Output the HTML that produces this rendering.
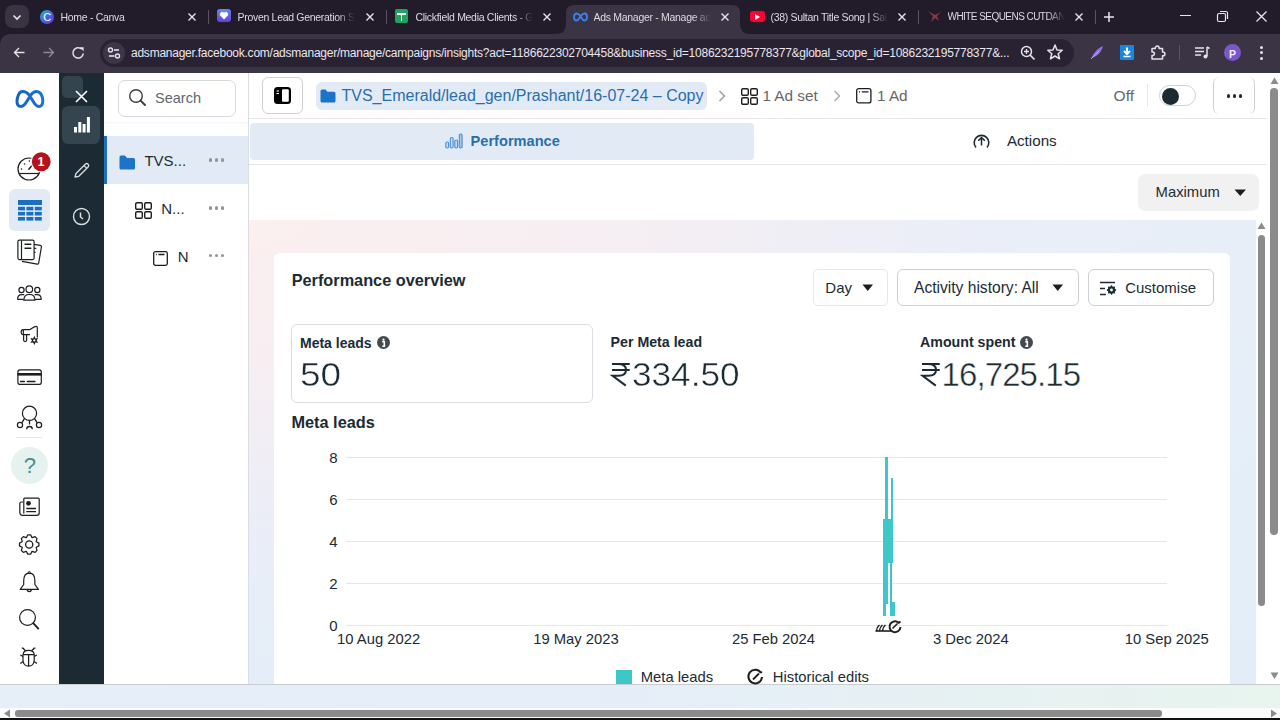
<!DOCTYPE html>
<html><head><meta charset="utf-8"><title>Ads Manager</title><style>
*{box-sizing:border-box}
html,body{margin:0;padding:0}
body{width:1280px;height:720px;overflow:hidden;position:relative;font-family:"Liberation Sans", sans-serif;background:#fff}
.t{position:absolute;line-height:1;white-space:nowrap}
.tabt{font-size:10.5px;color:#dedae3;letter-spacing:-0.3px;overflow:hidden;-webkit-mask-image:linear-gradient(90deg,#000 85%,transparent 100%);height:14px}
svg{overflow:visible}
</style></head><body>
<div style="position:absolute;left:0px;top:0px;width:1280px;height:44px;background:#211b2a"></div>
<div style="position:absolute;left:5px;top:5px;width:24px;height:23px;background:#3a3344;border-radius:8px"></div>
<svg style="position:absolute;left:11px;top:11px;" width="12" height="12" viewBox="0 0 12 12"><path d="M2.5 4.5 L6 8 L9.5 4.5" stroke="#e8e4ee" stroke-width="1.6" fill="none"/></svg>
<svg style="position:absolute;left:556px;top:4px" width="194" height="30" viewBox="0 0 194 30"><path d="M0 30 Q10 30 10 20 L10 9 Q10 1 18 1 L176 1 Q184 1 184 9 L184 20 Q184 30 194 30 Z" fill="#3b3445"/></svg>
<div style="position:absolute;left:208px;top:10px;width:1px;height:14px;background:#5a5366"></div>
<div style="position:absolute;left:386px;top:10px;width:1px;height:14px;background:#5a5366"></div>
<div style="position:absolute;left:918px;top:10px;width:1px;height:14px;background:#5a5366"></div>
<div style="position:absolute;left:1095px;top:10px;width:1px;height:14px;background:#5a5366"></div>
<div style="position:absolute;left:40px;top:10px;width:14px;height:14px;border-radius:50%;background:linear-gradient(135deg,#1fb8c9,#4e59e4 60%,#7a2fd0)"></div>
<div class="t" style="left:43.20px;top:12.18px;font-size:11px;color:#fff;font-family:"Liberation Serif",serif;font-style:italic;">C</div>
<div class="t tabt" style="left:60.5px;top:12.11px;width:117px;">Home - Canva</div>
<svg style="position:absolute;left:187px;top:12px;" width="10" height="10" viewBox="0 0 10 10"><path d="M1.5 1.5 L8.5 8.5 M8.5 1.5 L1.5 8.5" stroke="#e8e4ee" stroke-width="1.4"/></svg>
<div style="position:absolute;left:217px;top:9px;width:14px;height:13px;border-radius:3px;background:linear-gradient(180deg,#5a8cf0,#6a3fd8)"></div>
<svg style="position:absolute;left:219px;top:11px;" width="10" height="9" viewBox="0 0 10 9"><path d="M5 8.5 L1.2 4.6 A2.2 2.2 0 0 1 5 2 A2.2 2.2 0 0 1 8.8 4.6 Z" fill="#fff"/></svg>
<div class="t tabt" style="left:237.5px;top:12.11px;width:117px;">Proven Lead Generation St</div>
<svg style="position:absolute;left:365px;top:12px;" width="10" height="10" viewBox="0 0 10 10"><path d="M1.5 1.5 L8.5 8.5 M8.5 1.5 L1.5 8.5" stroke="#e8e4ee" stroke-width="1.4"/></svg>
<div style="position:absolute;left:395px;top:9px;width:13px;height:14px;border-radius:2px;background:#1fa463"></div>
<div style="position:absolute;left:397px;top:13px;width:9px;height:1.6px;background:#fff"></div>
<div style="position:absolute;left:400.5px;top:13px;width:1.6px;height:8px;background:#fff"></div>
<div class="t tabt" style="left:415.5px;top:12.11px;width:117px;">Clickfield Media Clients - G</div>
<svg style="position:absolute;left:542px;top:12px;" width="10" height="10" viewBox="0 0 10 10"><path d="M1.5 1.5 L8.5 8.5 M8.5 1.5 L1.5 8.5" stroke="#e8e4ee" stroke-width="1.4"/></svg>
<svg style="position:absolute;left:573px;top:12px;" width="15" height="10" viewBox="0 0 15 10"><path d="M3.5 1.5 C1.5 1.5 1 4 1 5.2 C1 7 2 8.5 3.5 8.5 C5.5 8.5 6.5 5.5 7.5 4.2 C8.5 3 9.5 1.5 11.5 1.5 C13.2 1.5 14 3.5 14 5 C14 7 13 8.5 11.5 8.5 C9.5 8.5 8 5 7.2 3.8 C6.2 2.4 5 1.5 3.5 1.5 Z" stroke="#3b82f0" stroke-width="1.8" fill="none"/></svg>
<div class="t tabt" style="left:593.5px;top:12.11px;width:117px;">Ads Manager - Manage ad</div>
<svg style="position:absolute;left:720px;top:12px;" width="10" height="10" viewBox="0 0 10 10"><path d="M1.5 1.5 L8.5 8.5 M8.5 1.5 L1.5 8.5" stroke="#e8e4ee" stroke-width="1.4"/></svg>
<div style="position:absolute;left:750px;top:11px;width:15px;height:11px;border-radius:3px;background:#ff0033"></div>
<svg style="position:absolute;left:755px;top:13.5px;" width="6" height="6" viewBox="0 0 6 6"><path d="M0 0 L5 3 L0 6 Z" fill="#fff"/></svg>
<div class="t tabt" style="left:770.5px;top:12.11px;width:117px;">(38) Sultan Title Song | Sal</div>
<svg style="position:absolute;left:897px;top:12px;" width="10" height="10" viewBox="0 0 10 10"><path d="M1.5 1.5 L8.5 8.5 M8.5 1.5 L1.5 8.5" stroke="#e8e4ee" stroke-width="1.4"/></svg>
<svg style="position:absolute;left:927px;top:9px;" width="15" height="15" viewBox="0 0 15 15"><path d="M1 2 L6 7 L4 13 L8 9 L12 12 L10 7 L14 3 L8 6 Z" fill="#8a3a45"/></svg>
<div class="t tabt" style="left:947.5px;top:12.11px;width:117px;font-size:10px;letter-spacing:-0.55px;">WHITE SEQUENS CUTDAN</div>
<svg style="position:absolute;left:1074px;top:12px;" width="10" height="10" viewBox="0 0 10 10"><path d="M1.5 1.5 L8.5 8.5 M8.5 1.5 L1.5 8.5" stroke="#e8e4ee" stroke-width="1.4"/></svg>
<svg style="position:absolute;left:1103px;top:11px;" width="12" height="12" viewBox="0 0 12 12"><path d="M6 1 V11 M1 6 H11" stroke="#e8e4ee" stroke-width="1.5"/></svg>
<div style="position:absolute;left:1180px;top:15px;width:11px;height:1px;background:#e8e4ee"></div>
<svg style="position:absolute;left:1216px;top:10px;" width="13" height="13" viewBox="0 0 13 13"><rect x="1.5" y="3.5" width="8" height="8" rx="1.5" stroke="#e8e4ee" stroke-width="1.2" fill="none"/><path d="M4 1.5 H10 Q11.5 1.5 11.5 3 V9" stroke="#e8e4ee" stroke-width="1.2" fill="none"/></svg>
<svg style="position:absolute;left:1255px;top:10px;" width="13" height="13" viewBox="0 0 13 13"><path d="M1.5 1.5 L11.5 11.5 M11.5 1.5 L1.5 11.5" stroke="#e8e4ee" stroke-width="1.3"/></svg>
<div style="position:absolute;left:0px;top:34px;width:1280px;height:39px;background:#3b3445;border-top-left-radius:10px"></div>
<svg style="position:absolute;left:11px;top:44px;" width="16" height="16" viewBox="0 0 16 16"><path d="M13.5 8.5 H3.5 M8 4 L3.5 8.5 L8 13" stroke="#e6e2ea" stroke-width="1.4" fill="none"/></svg>
<svg style="position:absolute;left:41px;top:44px;" width="16" height="16" viewBox="0 0 16 16"><path d="M2.5 8.5 H12.5 M8 4 L12.5 8.5 L8 13" stroke="#8d8696" stroke-width="1.4" fill="none"/></svg>
<svg style="position:absolute;left:70px;top:44px;" width="18" height="17" viewBox="0 0 18 17"><path d="M13.3 9.5 A5.2 5.2 0 1 1 11.6 5" stroke="#e6e2ea" stroke-width="1.5" fill="none"/><path d="M9.6 3.2 H13.6 V7.2 Z" fill="#e6e2ea"/></svg>
<div style="position:absolute;left:100px;top:39px;width:974px;height:28px;background:#292233;border-radius:14px"></div>
<div style="position:absolute;left:103px;top:42px;width:22px;height:22px;border-radius:50%;background:#3d3648"></div>
<svg style="position:absolute;left:106px;top:45px;" width="16" height="16" viewBox="0 0 16 16"><circle cx="4.5" cy="5" r="2" stroke="#e6e2ea" stroke-width="1.4" fill="none"/><path d="M8 5 H13" stroke="#e6e2ea" stroke-width="1.6"/><circle cx="11.5" cy="11" r="2" stroke="#e6e2ea" stroke-width="1.4" fill="none"/><path d="M3 11 H8.5" stroke="#e6e2ea" stroke-width="1.6"/></svg>
<div class="t" style="left:131px;top:47.14px;font-size:12px;color:#e9e6ee;letter-spacing:-0.24px">adsmanager.facebook.com/adsmanager/manage/campaigns/insights?act=1186622302704458&amp;business_id=1086232195778377&amp;global_scope_id=1086232195778377&amp;...</div>
<svg style="position:absolute;left:1019px;top:44px;" width="18" height="18" viewBox="0 0 18 18"><circle cx="7.5" cy="7.5" r="5" stroke="#e6e2ea" stroke-width="1.5" fill="none"/><path d="M11 11 L15.5 15.5" stroke="#e6e2ea" stroke-width="1.7"/><path d="M5 7.5 H10 M7.5 5 V10" stroke="#e6e2ea" stroke-width="1.3"/></svg>
<svg style="position:absolute;left:1046px;top:43px;" width="18" height="18" viewBox="0 0 18 18"><path d="M9 2 L11 7 L16.2 7.3 L12.2 10.7 L13.5 15.8 L9 13 L4.5 15.8 L5.8 10.7 L1.8 7.3 L7 7 Z" stroke="#e6e2ea" stroke-width="1.5" fill="none" stroke-linejoin="round"/></svg>
<svg style="position:absolute;left:1089px;top:45px;" width="16" height="15" viewBox="0 0 16 15"><path d="M2 14 C4 9 8 3 14 1 C13 6 9 11 3 13 Z" fill="#8f6ee0"/><path d="M2 14 L10 6" stroke="#c9b8f5" stroke-width="0.8"/></svg>
<div style="position:absolute;left:1120px;top:45px;width:14px;height:15px;background:#1a86e0;border-radius:1px"></div>
<svg style="position:absolute;left:1120px;top:45px;" width="14" height="15" viewBox="0 0 14 15"><path d="M7 2.5 V8.5 M4 6 L7 9 L10 6" stroke="#fff" stroke-width="2" fill="none"/><path d="M3.5 11.5 H10.5" stroke="#fff" stroke-width="1.5"/></svg>
<svg style="position:absolute;left:1149px;top:44px;" width="17" height="17" viewBox="0 0 17 17"><path d="M3 4.5 H6.3 V4 A1.9 1.9 0 0 1 10.1 4 V4.5 H13.5 V8 H14 A1.9 1.9 0 0 1 14 11.8 H13.5 V15 H3 V11.5 H3.8 A1.7 1.7 0 0 0 3.8 8.1 H3 Z" stroke="#e6e2ea" stroke-width="1.5" fill="none" stroke-linejoin="round"/></svg>
<div style="position:absolute;left:1179px;top:45px;width:1px;height:15px;background:#5b5466"></div>
<svg style="position:absolute;left:1194px;top:45px;" width="17" height="15" viewBox="0 0 17 15"><path d="M1 3 H10 M1 6.5 H10 M1 10 H7" stroke="#e6e2ea" stroke-width="1.5"/><path d="M13 2 V11" stroke="#e6e2ea" stroke-width="1.5"/><circle cx="11.5" cy="11.5" r="2" fill="#e6e2ea"/><path d="M13 2 L15.5 3.5" stroke="#e6e2ea" stroke-width="1.5"/></svg>
<div style="position:absolute;left:1224px;top:44px;width:17px;height:17px;border-radius:50%;background:#7c57c9"></div>
<div class="t" style="left:1229.00px;top:48.61px;font-size:10.5px;color:#f3eeff;font-weight:700;">P</div>
<div style="position:absolute;left:1260.3px;top:45.8px;width:3px;height:3px;border-radius:50%;background:#e6e2ea"></div>
<div style="position:absolute;left:1260.3px;top:51.3px;width:3px;height:3px;border-radius:50%;background:#e6e2ea"></div>
<div style="position:absolute;left:1260.3px;top:56.8px;width:3px;height:3px;border-radius:50%;background:#e6e2ea"></div>
<div style="position:absolute;left:0px;top:73px;width:1280px;height:611px;background:#fff"></div>
<div style="position:absolute;left:0px;top:684px;width:1280px;height:1px;background:#c9cdd2"></div>
<div style="position:absolute;left:0px;top:685px;width:1280px;height:23px;background:linear-gradient(90deg,#e6eef8 0%,#e5eef8 50%,#e8f4ee 100%)"></div>
<div style="position:absolute;left:0px;top:708px;width:1280px;height:10px;background:#fbfbfb"></div>
<div style="position:absolute;left:15px;top:710px;width:1147px;height:6.5px;background:#8b8b8b;border-radius:3px"></div>
<svg style="position:absolute;left:3px;top:709px;" width="8" height="9" viewBox="0 0 8 9"><path d="M7 0.5 L1 4.5 L7 8.5 Z" fill="#8b8b8b"/></svg>
<svg style="position:absolute;left:1270px;top:709px;" width="8" height="9" viewBox="0 0 8 9"><path d="M1 0.5 L7 4.5 L1 8.5 Z" fill="#8b8b8b"/></svg>
<div style="position:absolute;left:0px;top:718px;width:1280px;height:2px;background:#111"></div>
<svg style="position:absolute;left:14px;top:88px;" width="32" height="22" viewBox="0 0 32 22"><defs><linearGradient id="mg" x1="0" y1="0" x2="1" y2="0"><stop offset="0" stop-color="#1463c4"/><stop offset="1" stop-color="#1a74da"/></linearGradient></defs><path d="M8.5 3.5 C5 3.5 3 9 3 13.5 C3 16.5 4.5 18.5 7 18.5 C9.5 18.5 11.5 16 14 11.5 L16.5 7.5 C18.5 4.5 20.5 3.5 22.5 3.5 C26.5 3.5 28.8 8 28.8 12.8 C28.8 16.3 27.2 18.5 24.8 18.5 C22.3 18.5 20.5 16 18 11.5 L15.5 7.5 C13 4 11 3.5 8.5 3.5 Z" stroke="url(#mg)" stroke-width="3" fill="none" stroke-linejoin="round"/></svg>
<svg style="position:absolute;left:0;top:0" width="59" height="720" viewBox="0 0 59 720"><circle cx="29" cy="169" r="11" stroke="#1c1e21" stroke-width="1.2" fill="none"/><path d="M18.6 173.5 H39.4" stroke="#1c1e21" stroke-width="1.2"/><path d="M28.8 169.2 L32 165.6" stroke="#1c1e21" stroke-width="1.5" stroke-linecap="round"/><circle cx="21.5" cy="169" r="0.8" fill="#1c1e21"/><circle cx="24.5" cy="164" r="0.8" fill="#1c1e21"/><circle cx="29.5" cy="161" r="0.8" fill="#1c1e21"/><circle cx="41.25" cy="161.75" r="10.6" fill="#fff"/><circle cx="41.25" cy="161.75" r="9.4" fill="#b5121d"/><rect x="17.9" y="240.1" width="16.2" height="19.5" rx="1.5" stroke="#1c1e21" stroke-width="1.2" fill="none"/><path d="M21.5 240.5 V259.5" stroke="#1c1e21" stroke-width="1.2"/><path d="M24.5 244.3 H31.3 M24.5 248.3 H31.3" stroke="#1c1e21" stroke-width="1.5"/><path d="M34.1 244.4 L40.3 245.4 Q41.6 245.7 41.4 247 L38.7 263 Q38.5 264.3 37.2 264.1 L22 261.3" stroke="#1c1e21" stroke-width="1.2" fill="none"/><path d="M34.3 248.3 H36.3 M34.3 252.3 H35.5" stroke="#1c1e21" stroke-width="1.3"/><circle cx="21.5" cy="290" r="2.6" stroke="#1c1e21" stroke-width="1.2" fill="none"/><circle cx="29.3" cy="289.2" r="3.3" stroke="#1c1e21" stroke-width="1.2" fill="none"/><circle cx="37.3" cy="290" r="2.6" stroke="#1c1e21" stroke-width="1.2" fill="none"/><path d="M24.2 294.6 H21.8 C19 294.6 17.6 296.2 17.6 299.3 H23.8 M34.6 294.6 H37 C39.8 294.6 41.2 296.2 41.2 299.3 H35" stroke="#1c1e21" stroke-width="1.2" fill="none" stroke-linejoin="round"/><path d="M23.8 300.2 C23.8 296 25.8 294.3 29.4 294.3 C33 294.3 35 296 35 300.2 Z" stroke="#1c1e21" stroke-width="1.2" fill="#fff" stroke-linejoin="round"/><path d="M23.3 329.6 H29.5 C31.5 329.6 33.5 326.3 36 326.3 Q37.3 326.3 37.3 327.6 V337.5" stroke="#1c1e21" stroke-width="1.2" fill="none"/><path d="M23.3 329.6 C20.5 329.6 20.3 334.6 23.3 334.6 H30" stroke="#1c1e21" stroke-width="1.2" fill="none"/><path d="M23.3 329.6 V334.6 M23.6 334.8 V340 Q23.6 341.5 25.1 341.5 Q26.6 341.5 26.6 340 V334.8" stroke="#1c1e21" stroke-width="1.25" fill="none"/><polygon points="34.30,335.80 35.45,338.41 38.28,338.10 36.60,340.40 38.28,342.70 35.45,342.39 34.30,345.00 33.15,342.39 30.32,342.70 32.00,340.40 30.32,338.10 33.15,338.41" fill="#1c1e21"/><circle cx="34.3" cy="340.4" r="1.1" fill="#fff"/><rect x="17.9" y="369.8" width="23.4" height="14.6" rx="2.2" stroke="#1c1e21" stroke-width="1.2" fill="none"/><rect x="17.5" y="373" width="24" height="2.6" fill="#1c1e21"/><path d="M20.5 381.5 H24.4 M27.2 381.5 H35" stroke="#1c1e21" stroke-width="1.3" stroke-linecap="round"/><circle cx="29.5" cy="413.3" r="7.1" stroke="#1c1e21" stroke-width="1.2" fill="none"/><circle cx="20" cy="425" r="2.6" stroke="#1c1e21" stroke-width="1.2" fill="none"/><circle cx="39" cy="425" r="2.6" stroke="#1c1e21" stroke-width="1.2" fill="none"/><path d="M24.4 418.6 L22 422.7 M34.6 418.6 L37 422.7 M29.5 420.4 V424.5 M26.7 429.3 A2.8 2.8 0 0 1 32.3 429.3" stroke="#1c1e21" stroke-width="1.3" fill="none"/><path d="M23.8 498.2 H38.2 Q39.2 498.2 39.2 499.2 V513 Q39.2 515.4 36.8 515.4 H22.5 Q20 515.4 19.8 512.5 V503.5 Q19.8 502 21.5 502 H23.3" stroke="#1c1e21" stroke-width="1.2" fill="none"/><path d="M23.8 498.2 V513.5" stroke="#1c1e21" stroke-width="1.2"/><circle cx="28.5" cy="503.3" r="2.4" fill="#1c1e21"/><path d="M26.3 508.5 H36 M26.3 511.6 H36" stroke="#1c1e21" stroke-width="1.3"/><path d="M36.30 541.79 L38.90 543.12 L38.90 545.88 L36.30 547.21 L36.14 547.61 L37.04 550.38 L35.08 552.34 L32.31 551.44 L31.91 551.60 L30.58 554.20 L27.82 554.20 L26.49 551.60 L26.09 551.44 L23.32 552.34 L21.36 550.38 L22.26 547.61 L22.10 547.21 L19.50 545.88 L19.50 543.12 L22.10 541.79 L22.26 541.39 L21.36 538.62 L23.32 536.66 L26.09 537.56 L26.49 537.40 L27.82 534.80 L30.58 534.80 L31.91 537.40 L32.31 537.56 L35.08 536.66 L37.04 538.62 L36.14 541.39 Z" stroke="#1c1e21" stroke-width="1.25" fill="none" stroke-linejoin="round"/><circle cx="29.2" cy="544.5" r="3.6" stroke="#1c1e21" stroke-width="1.3" fill="none"/><path d="M29.3 573.2 C24.6 573.2 23.7 577.5 23.7 581 V584.5 L20.2 589.4 H38.4 L34.9 584.5 V581 C34.9 577.5 34 573.2 29.3 573.2 Z" stroke="#1c1e21" stroke-width="1.2" fill="none" stroke-linejoin="round"/><circle cx="29.3" cy="572.6" r="1.1" stroke="#1c1e21" stroke-width="1" fill="none"/><path d="M27.3 589.6 A2 2 0 0 0 31.3 589.6" stroke="#1c1e21" stroke-width="1.3" fill="none"/><circle cx="27.5" cy="617.5" r="7.9" stroke="#1c1e21" stroke-width="1.2" fill="none"/><path d="M33.2 623.2 L38.3 628.6" stroke="#1c1e21" stroke-width="1.9" stroke-linecap="round"/><path d="M23 655 C23 651.5 25.5 650.3 28.6 650.3 C31.7 650.3 34.2 651.5 34.2 655 V660 C34.2 664 31.7 666.2 28.6 666.2 C25.5 666.2 23 664 23 660 Z" stroke="#1c1e21" stroke-width="1.2" fill="none"/><path d="M23 654.5 H34.2 M28.6 654.5 V666 M25.5 650.8 L23 648.2 H21.8 M31.7 650.8 L34.2 648.2 H35.4 M23 656.5 L20.3 655 M34.2 656.5 L36.9 655 M23 661.5 L20.3 663.5 M34.2 661.5 L36.9 663.5" stroke="#1c1e21" stroke-width="1.25" fill="none"/></svg>
<div class="t" style="left:37.60px;top:156.21px;font-size:12.5px;color:#fff;font-weight:700;">1</div>
<div style="position:absolute;left:9px;top:189px;width:41px;height:42px;background:#e2ebf5;border-radius:6px"></div>
<svg style="position:absolute;left:17.5px;top:200px;" width="24" height="21" viewBox="0 0 24 21"><rect x="0" y="0" width="24" height="5" fill="#1b6fc2"/><rect x="0.0" y="6.8" width="7" height="3.6" fill="#1b6fc2"/><rect x="8.4" y="6.8" width="7" height="3.6" fill="#1b6fc2"/><rect x="16.8" y="6.8" width="7" height="3.6" fill="#1b6fc2"/><rect x="0.0" y="11.9" width="7" height="3.6" fill="#1b6fc2"/><rect x="8.4" y="11.9" width="7" height="3.6" fill="#1b6fc2"/><rect x="16.8" y="11.9" width="7" height="3.6" fill="#1b6fc2"/><rect x="0.0" y="17.0" width="7" height="3.6" fill="#1b6fc2"/><rect x="8.4" y="17.0" width="7" height="3.6" fill="#1b6fc2"/><rect x="16.8" y="17.0" width="7" height="3.6" fill="#1b6fc2"/></svg>
<div style="position:absolute;left:16px;top:437px;width:26px;height:1px;background:#e4e6eb"></div>
<div style="position:absolute;left:11px;top:446.5px;width:37px;height:37px;border-radius:50%;background:#e6f2ef"></div>
<div class="t" style="left:23.80px;top:454.87px;font-size:22px;color:#4b8d8a;">?</div>
<div style="position:absolute;left:59px;top:73px;width:45px;height:611px;background:#1c2b33"></div>
<div style="position:absolute;left:62px;top:76px;width:21px;height:22px;background:#34444e;border-radius:5px"></div>
<div style="position:absolute;left:62px;top:106px;width:38px;height:38px;background:#344550;border-radius:6px"></div>
<svg style="position:absolute;left:75px;top:90px;" width="13" height="13" viewBox="0 0 13 13"><path d="M1 1 L12 12 M12 1 L1 12" stroke="#fff" stroke-width="1.6"/></svg>
<svg style="position:absolute;left:74px;top:117px;" width="16" height="16" viewBox="0 0 16 16"><rect x="0" y="10" width="3" height="5.5" fill="#fff"/><rect x="4.3" y="5" width="3" height="10.5" fill="#fff"/><rect x="8.6" y="7" width="3" height="8.5" fill="#fff"/><rect x="12.9" y="0" width="3" height="15.5" fill="#fff"/></svg>
<svg style="position:absolute;left:73px;top:161px;" width="18" height="18" viewBox="0 0 18 18"><path d="M3 12.5 L12.5 3 A2 2 0 0 1 15.3 5.8 L5.8 15.3 L2 16 Z" stroke="#d8dde0" stroke-width="1.3" fill="none" stroke-linejoin="round"/><path d="M11 4.5 L13.8 7.3" stroke="#d8dde0" stroke-width="1.2"/></svg>
<svg style="position:absolute;left:72px;top:207px;" width="19" height="19" viewBox="0 0 19 19"><circle cx="9.5" cy="9.5" r="8" stroke="#d8dde0" stroke-width="1.4" fill="none"/><path d="M8.5 5.5 V10 L11 12" stroke="#d8dde0" stroke-width="1.5" fill="none"/></svg>
<div style="position:absolute;left:248px;top:73px;width:1px;height:611px;background:#dadde1"></div>
<div style="position:absolute;left:117.5px;top:79.5px;width:118px;height:37px;border:1px solid #d6d9dd;border-radius:7px;background:#fff"></div>
<svg style="position:absolute;left:128px;top:88px;" width="20" height="20" viewBox="0 0 20 20"><circle cx="8" cy="8" r="6.3" stroke="#3a3c40" stroke-width="1.4" fill="none"/><path d="M12.6 12.6 L17 17" stroke="#3a3c40" stroke-width="2" stroke-linecap="round"/></svg>
<div class="t" style="left:155.00px;top:90.92px;font-size:14.5px;color:#606770;">Search</div>
<div style="position:absolute;left:104px;top:122px;width:144px;height:2px;background:linear-gradient(180deg,#f2f3f5,#fff)"></div>
<div style="position:absolute;left:104px;top:136px;width:144px;height:48px;background:#e2ebf5"></div>
<div style="position:absolute;left:104px;top:136px;width:2.5px;height:48px;background:#1b6fc2"></div>
<svg style="position:absolute;left:119px;top:155px;" width="17" height="15" viewBox="0 0 17 15"><path d="M0.5 2 Q0.5 0.5 2 0.5 H6 L8 3 H14.5 Q16 3 16 4.5 V13 Q16 14.5 14.5 14.5 H2 Q0.5 14.5 0.5 13 Z" fill="#1b74c8"/></svg>
<div class="t" style="left:144.40px;top:152.89px;font-size:15px;color:#1c2b33;">TVS...</div>
<div style="position:absolute;left:208.7px;top:158.2px;width:3.6px;height:3.6px;border-radius:50%;background:#8d949e"></div>
<div style="position:absolute;left:214.7px;top:158.2px;width:3.6px;height:3.6px;border-radius:50%;background:#8d949e"></div>
<div style="position:absolute;left:220.7px;top:158.2px;width:3.6px;height:3.6px;border-radius:50%;background:#8d949e"></div>
<svg style="position:absolute;left:135px;top:202px;" width="17" height="17" viewBox="0 0 17 17"><rect x="0.7" y="0.7" width="6.6" height="6.6" rx="1.3" stroke="#1c1e21" stroke-width="1.4" fill="none"/><rect x="9.7" y="0.7" width="6.6" height="6.6" rx="1.3" stroke="#1c1e21" stroke-width="1.4" fill="none"/><rect x="0.7" y="9.7" width="6.6" height="6.6" rx="1.3" stroke="#1c1e21" stroke-width="1.4" fill="none"/><rect x="9.7" y="9.7" width="6.6" height="6.6" rx="1.3" stroke="#1c1e21" stroke-width="1.4" fill="none"/></svg>
<div class="t" style="left:161.25px;top:201.09px;font-size:15px;color:#1c2b33;">N...</div>
<div style="position:absolute;left:208.7px;top:206.2px;width:3.6px;height:3.6px;border-radius:50%;background:#8d949e"></div>
<div style="position:absolute;left:214.7px;top:206.2px;width:3.6px;height:3.6px;border-radius:50%;background:#8d949e"></div>
<div style="position:absolute;left:220.7px;top:206.2px;width:3.6px;height:3.6px;border-radius:50%;background:#8d949e"></div>
<svg style="position:absolute;left:153px;top:251px;" width="15" height="15" viewBox="0 0 15 15"><rect x="0.7" y="0.7" width="13.6" height="13.6" rx="1.8" stroke="#1c1e21" stroke-width="1.3" fill="none"/><path d="M3 3.5 H3.8 M5.5 3.5 H11.5" stroke="#1c1e21" stroke-width="1.3"/></svg>
<div class="t" style="left:177.75px;top:249.29px;font-size:15px;color:#1c2b33;">N</div>
<div style="position:absolute;left:208.7px;top:253.79999999999998px;width:3.6px;height:3.6px;border-radius:50%;background:#8d949e"></div>
<div style="position:absolute;left:214.7px;top:253.79999999999998px;width:3.6px;height:3.6px;border-radius:50%;background:#8d949e"></div>
<div style="position:absolute;left:220.7px;top:253.79999999999998px;width:3.6px;height:3.6px;border-radius:50%;background:#8d949e"></div>
<div style="position:absolute;left:262px;top:77px;width:41px;height:37px;border:1px solid #ced0d4;border-radius:6px;background:#fff"></div>
<svg style="position:absolute;left:274px;top:87px;" width="17" height="17" viewBox="0 0 17 17"><rect x="0" y="0" width="17" height="17" rx="3.5" fill="#000"/><rect x="8" y="2.2" width="6.8" height="12.6" rx="1" fill="#fff"/><path d="M2.5 4 H5 M2.5 6.5 H5" stroke="#fff" stroke-width="1"/></svg>
<div style="position:absolute;left:316px;top:82px;width:391px;height:28px;background:#e2ebf5;border-radius:6px"></div>
<svg style="position:absolute;left:320px;top:89px;" width="16" height="14" viewBox="0 0 16 14"><path d="M0.5 2 Q0.5 0.5 2 0.5 H5.5 L7.5 2.8 H14 Q15.5 2.8 15.5 4.3 V12 Q15.5 13.5 14 13.5 H2 Q0.5 13.5 0.5 12 Z" fill="#1b74c8"/></svg>
<div class="t" style="left:341.50px;top:87.65px;font-size:16px;color:#2a6ead;">TVS_Emerald/lead_gen/Prashant/16-07-24 – Copy</div>
<svg style="position:absolute;left:718px;top:90px;" width="9" height="12" viewBox="0 0 9 12"><path d="M1.5 1 L6.5 6 L1.5 11" stroke="#9ba0a6" stroke-width="1.5" fill="none"/></svg>
<svg style="position:absolute;left:741px;top:87.5px;" width="17" height="17" viewBox="0 0 17 17"><rect x="0.7" y="0.7" width="6.6" height="6.6" rx="1.3" stroke="#1c1e21" stroke-width="1.4" fill="none"/><rect x="9.7" y="0.7" width="6.6" height="6.6" rx="1.3" stroke="#1c1e21" stroke-width="1.4" fill="none"/><rect x="0.7" y="9.7" width="6.6" height="6.6" rx="1.3" stroke="#1c1e21" stroke-width="1.4" fill="none"/><rect x="9.7" y="9.7" width="6.6" height="6.6" rx="1.3" stroke="#1c1e21" stroke-width="1.4" fill="none"/></svg>
<div class="t" style="left:762.40px;top:88.24px;font-size:15.3px;color:#65676b;">1 Ad set</div>
<svg style="position:absolute;left:833px;top:90px;" width="9" height="12" viewBox="0 0 9 12"><path d="M1.5 1 L6.5 6 L1.5 11" stroke="#a8acb1" stroke-width="1.5" fill="none"/></svg>
<svg style="position:absolute;left:856px;top:88px;" width="16" height="16" viewBox="0 0 16 16"><rect x="0.7" y="0.7" width="14.2" height="14.2" rx="2" stroke="#1c1e21" stroke-width="1.3" fill="none"/><path d="M3 3.8 H4 M5.8 3.8 H12.5" stroke="#1c1e21" stroke-width="1.3"/></svg>
<div class="t" style="left:877.00px;top:88.24px;font-size:15.3px;color:#65676b;">1 Ad</div>
<div class="t" style="left:1113.60px;top:88.07px;font-size:15.5px;color:#65676b;">Off</div>
<div style="position:absolute;left:1147px;top:84px;width:1px;height:23px;background:#e4e6eb"></div>
<div style="position:absolute;left:1159px;top:85px;width:37px;height:21px;border:1px solid #ced0d4;border-radius:11px;background:#fff"></div>
<div style="position:absolute;left:1162px;top:87.5px;width:17px;height:17px;border-radius:50%;background:#1c2b33"></div>
<div style="position:absolute;left:1213px;top:77px;width:42px;height:37px;border-left:1px solid #ced0d4;border-right:1px solid #ced0d4;border-radius:6px"></div>
<div style="position:absolute;left:1226.6000000000001px;top:94.0px;width:3.6px;height:3.6px;border-radius:50%;background:#1c2b33"></div>
<div style="position:absolute;left:1232.6000000000001px;top:94.0px;width:3.6px;height:3.6px;border-radius:50%;background:#1c2b33"></div>
<div style="position:absolute;left:1238.6000000000001px;top:94.0px;width:3.6px;height:3.6px;border-radius:50%;background:#1c2b33"></div>
<div style="position:absolute;left:249px;top:118px;width:1018px;height:1px;background:#e4e6eb"></div>
<div style="position:absolute;left:250px;top:123px;width:504px;height:37px;background:#e2ebf5;border-radius:4px"></div>
<svg style="position:absolute;left:445px;top:133px;" width="18" height="16" viewBox="0 0 18 16"><rect x="0.8" y="9" width="2.8" height="6" rx="1.2" stroke="#4a8fd0" stroke-width="1.1" fill="#c5dbf1"/><rect x="5.3" y="4.5" width="2.8" height="10.5" rx="1.2" stroke="#4a8fd0" stroke-width="1.1" fill="#c5dbf1"/><rect x="9.8" y="7" width="2.8" height="8" rx="1.2" stroke="#4a8fd0" stroke-width="1.1" fill="#c5dbf1"/><rect x="14.3" y="1" width="2.8" height="14" rx="1.2" stroke="#4a8fd0" stroke-width="1.1" fill="#a9c9ea"/></svg>
<div class="t" style="left:470.60px;top:133.63px;font-size:14.6px;color:#2a6ead;font-weight:700;">Performance</div>
<svg style="position:absolute;left:972px;top:133px;" width="19" height="16" viewBox="0 0 19 16"><path d="M4 14.5 A7.3 7.3 0 1 1 15 14.5" stroke="#1c2b33" stroke-width="1.6" fill="none"/><path d="M9.5 12.5 V4.5 M6.2 7.8 L9.5 4.5 L12.8 7.8" stroke="#1c2b33" stroke-width="1.5" fill="none"/></svg>
<div class="t" style="left:1006.90px;top:133.13px;font-size:15.2px;color:#1c2b33;">Actions</div>
<div style="position:absolute;left:249px;top:164px;width:1018px;height:1px;background:#e4e6eb"></div>
<div style="position:absolute;left:1138px;top:174px;width:121px;height:37px;background:#f1f1f2;border-radius:7px"></div>
<div class="t" style="left:1155.60px;top:185.26px;font-size:14.8px;color:#1c2b33;">Maximum</div>
<svg style="position:absolute;left:1234px;top:189px;" width="13" height="8" viewBox="0 0 13 8"><path d="M0.5 0.5 H12 L6.25 7 Z" fill="#1c1e21"/></svg>
<div style="position:absolute;left:249px;top:220px;width:1007px;height:464px;background:radial-gradient(ellipse 1150px 520px at 0 0,rgba(251,239,239,1) 0%,rgba(249,238,241,0.85) 30%,rgba(240,237,247,0.5) 62%,rgba(228,237,249,0) 100%),linear-gradient(180deg,#e6eff9 0%,#e2edf8 100%)"></div>
<div style="position:absolute;left:274px;top:253px;width:956px;height:431px;background:#fff;border-radius:6px 6px 0 0"></div>
<div class="t" style="left:291.70px;top:272.39px;font-size:16.3px;color:#1c2b33;font-weight:700;">Performance overview</div>
<div style="position:absolute;left:813px;top:269px;width:75px;height:37px;border:1px solid #e4e6eb;border-radius:5px;background:#fff"></div>
<div class="t" style="left:825.30px;top:280.40px;font-size:15px;color:#1c2b33;">Day</div>
<svg style="position:absolute;left:862px;top:284px;" width="12" height="8" viewBox="0 0 12 8"><path d="M0.5 0.5 H11 L5.75 7 Z" fill="#1c1e21"/></svg>
<div style="position:absolute;left:897px;top:269px;width:182px;height:37px;border:1px solid #ced0d4;border-radius:6px;background:#fff"></div>
<div class="t" style="left:914.00px;top:279.89px;font-size:15.6px;color:#1c2b33;">Activity history: All</div>
<svg style="position:absolute;left:1052px;top:284px;" width="12" height="8" viewBox="0 0 12 8"><path d="M0.5 0.5 H11 L5.75 7 Z" fill="#1c1e21"/></svg>
<div style="position:absolute;left:1087.5px;top:269px;width:126px;height:37px;border:1px solid #ced0d4;border-radius:6px;background:#fff"></div>
<svg style="position:absolute;left:1100px;top:281px;" width="17" height="15" viewBox="0 0 17 15"><path d="M0 1.5 H15 M0 7.5 H5 M0 13.5 H6" stroke="#1c2b33" stroke-width="1.3"/></svg>
<svg style="position:absolute;left:1100px;top:281px;" width="17" height="15" viewBox="0 0 17 15"><polygon points="16.50,9.00 14.83,10.38 15.04,12.54 12.88,12.33 11.50,14.00 10.12,12.33 7.96,12.54 8.17,10.38 6.50,9.00 8.17,7.62 7.96,5.46 10.12,5.67 11.50,4.00 12.88,5.67 15.04,5.46 14.83,7.62" fill="#1c2b33"/><circle cx="11.5" cy="9" r="1.4" fill="#fff"/></svg>
<div class="t" style="left:1125.20px;top:280.40px;font-size:15px;color:#1c2b33;">Customise</div>
<div style="position:absolute;left:291px;top:324px;width:302px;height:79px;border:1px solid #dadde1;border-radius:6px;background:#fff"></div>
<div class="t" style="left:300.00px;top:335.64px;font-size:14px;color:#1c2b33;font-weight:700;">Meta leads</div>
<div style="position:absolute;left:376.8px;top:336.0px;width:13px;height:13px;border-radius:50%;background:#444950"></div>
<svg style="position:absolute;left:376.8px;top:336.0px;" width="13" height="13" viewBox="0 0 13 13"><circle cx="6.5" cy="3.6" r="1.1" fill="#fff"/><path d="M5.2 5.6 H7.3 V10.3 M5.3 10.3 H8.2" stroke="#fff" stroke-width="1.6" fill="none"/></svg>
<div class="t" style="left:299.50px;top:358.05px;font-size:33px;color:#1c2b33;transform:scaleX(1.12);transform-origin:0 0;-webkit-text-stroke:0.45px #fff;">50</div>
<div class="t" style="left:610.60px;top:335.27px;font-size:14.2px;color:#1c2b33;font-weight:700;">Per Meta lead</div>
<svg style="position:absolute;left:612px;top:363px;" width="18" height="23" viewBox="0 0 18 23"><path d="M0 1 H17.7 M0 7.1 H17.7 M6 1 C11.8 1 14 3.5 14 6.8 C14 10.5 11.5 12.8 6.5 12.8 H0.6 L13.8 22.6" stroke="#1c2b33" stroke-width="2" fill="none" stroke-linejoin="miter"/></svg>
<div class="t" style="left:632.00px;top:358.05px;font-size:33px;color:#1c2b33;transform:scaleX(1.065);transform-origin:0 0;-webkit-text-stroke:0.45px #fff;">334.50</div>
<div class="t" style="left:920.10px;top:335.47px;font-size:14.2px;color:#1c2b33;font-weight:700;">Amount spent</div>
<div style="position:absolute;left:1020.0px;top:335.8px;width:13px;height:13px;border-radius:50%;background:#444950"></div>
<svg style="position:absolute;left:1020.0px;top:335.8px;" width="13" height="13" viewBox="0 0 13 13"><circle cx="6.5" cy="3.6" r="1.1" fill="#fff"/><path d="M5.2 5.6 H7.3 V10.3 M5.3 10.3 H8.2" stroke="#fff" stroke-width="1.6" fill="none"/></svg>
<svg style="position:absolute;left:922px;top:363px;" width="18" height="23" viewBox="0 0 18 23"><path d="M0 1 H17.7 M0 7.1 H17.7 M6 1 C11.8 1 14 3.5 14 6.8 C14 10.5 11.5 12.8 6.5 12.8 H0.6 L13.8 22.6" stroke="#1c2b33" stroke-width="2" fill="none" stroke-linejoin="miter"/></svg>
<div class="t" style="left:941.50px;top:358.25px;font-size:33px;color:#1c2b33;letter-spacing:-0.9px;-webkit-text-stroke:0.45px #fff;">16,725.15</div>
<div class="t" style="left:291.50px;top:413.69px;font-size:16.3px;color:#1c2b33;font-weight:700;">Meta leads</div>
<div style="position:absolute;left:346px;top:457px;width:821px;height:1.3px;background:#e4e6eb"></div>
<div class="t" style="left:300px;width:37.5px;text-align:right;top:449.80px;font-size:15px;color:#1c2b33">8</div>
<div style="position:absolute;left:346px;top:499px;width:821px;height:1.3px;background:#e4e6eb"></div>
<div class="t" style="left:300px;width:37.5px;text-align:right;top:491.80px;font-size:15px;color:#1c2b33">6</div>
<div style="position:absolute;left:346px;top:541px;width:821px;height:1.3px;background:#e4e6eb"></div>
<div class="t" style="left:300px;width:37.5px;text-align:right;top:533.79px;font-size:15px;color:#1c2b33">4</div>
<div style="position:absolute;left:346px;top:583px;width:821px;height:1.3px;background:#e4e6eb"></div>
<div class="t" style="left:300px;width:37.5px;text-align:right;top:575.79px;font-size:15px;color:#1c2b33">2</div>
<div style="position:absolute;left:346px;top:625px;width:821px;height:1.3px;background:#e4e6eb"></div>
<div class="t" style="left:300px;width:37.5px;text-align:right;top:617.79px;font-size:15px;color:#1c2b33">0</div>
<div class="t" style="left:318.6px;width:120px;text-align:center;top:632.46px;font-size:14.8px;color:#1c2b33">10 Aug 2022</div>
<div class="t" style="left:516px;width:120px;text-align:center;top:632.46px;font-size:14.8px;color:#1c2b33">19 May 2023</div>
<div class="t" style="left:713.5px;width:120px;text-align:center;top:632.46px;font-size:14.8px;color:#1c2b33">25 Feb 2024</div>
<div class="t" style="left:910.8px;width:120px;text-align:center;top:632.46px;font-size:14.8px;color:#1c2b33">3 Dec 2024</div>
<div class="t" style="left:1106.7px;width:120px;text-align:center;top:632.46px;font-size:14.8px;color:#1c2b33">10 Sep 2025</div>
<div style="position:absolute;left:885.3px;top:456.5px;width:2.30px;height:62.50px;background:#3ec7c9"></div>
<div style="position:absolute;left:890.6px;top:477.5px;width:2.40px;height:41.50px;background:#3ec7c9"></div>
<div style="position:absolute;left:883.4px;top:519px;width:9.90px;height:44.00px;background:#3ec7c9"></div>
<div style="position:absolute;left:883.4px;top:563px;width:2.30px;height:52.50px;background:#3ec7c9"></div>
<div style="position:absolute;left:886.2px;top:563px;width:1.80px;height:41.00px;background:#3ec7c9"></div>
<div style="position:absolute;left:889.8px;top:563px;width:2.10px;height:52.50px;background:#3ec7c9"></div>
<div style="position:absolute;left:892.4px;top:602px;width:2.60px;height:13.50px;background:#3ec7c9"></div>
<svg style="position:absolute;left:875px;top:619px;" width="28" height="13" viewBox="0 0 28 13"><path d="M1.5 12 C2 9 3 7 4.5 6 M4.5 12 C5 9 6 7 7.5 6 M7.5 12 C8 9 9 7 10.5 6" stroke="#1c1e21" stroke-width="1.4" fill="none"/><path d="M0.5 12 H16" stroke="#1c1e21" stroke-width="1.6"/><path d="M24.5 4.5 A5.5 5.5 0 1 0 25.5 8" stroke="#1c1e21" stroke-width="2" fill="none"/><path d="M17.5 9.5 L22.5 4.5" stroke="#1c1e21" stroke-width="1.6"/><circle cx="24.8" cy="3" r="1" fill="#1c1e21"/></svg>
<div style="position:absolute;left:615.5px;top:669.7px;width:16.3px;height:14.3px;background:#3ec7c9"></div>
<div class="t" style="left:640.80px;top:670.16px;font-size:14.8px;color:#1c2b33;">Meta leads</div>
<svg style="position:absolute;left:747px;top:669px;" width="17" height="16" viewBox="0 0 17 16"><path d="M14 4 A6.8 6.8 0 1 0 15 8" stroke="#1c1e21" stroke-width="2" fill="none"/><path d="M6 10.5 L12 4.5" stroke="#1c1e21" stroke-width="1.8"/><circle cx="14.3" cy="3.2" r="1" fill="#1c1e21"/></svg>
<div class="t" style="left:772.80px;top:670.16px;font-size:14.8px;color:#1c2b33;">Historical edits</div>
<svg style="position:absolute;left:1256.5px;top:222px;" width="9" height="8" viewBox="0 0 9 8"><path d="M0.5 7 L4.5 0.5 L8.5 7 Z" fill="#8b8b8b"/></svg>
<div style="position:absolute;left:1257.5px;top:234.5px;width:7px;height:371px;background:#8b8b8b;border-radius:3.5px"></div>
<svg style="position:absolute;left:1269.5px;top:77px;" width="9" height="8" viewBox="0 0 9 8"><path d="M0.5 7 L4.5 0.5 L8.5 7 Z" fill="#8b8b8b"/></svg>
<div style="position:absolute;left:1270px;top:87.5px;width:7.5px;height:447px;background:#8b8b8b;border-radius:3.7px"></div>
<svg style="position:absolute;left:1269.5px;top:672px;" width="9" height="8" viewBox="0 0 9 8"><path d="M0.5 0.5 L8.5 0.5 L4.5 7 Z" fill="#8b8b8b"/></svg>
</body></html>
